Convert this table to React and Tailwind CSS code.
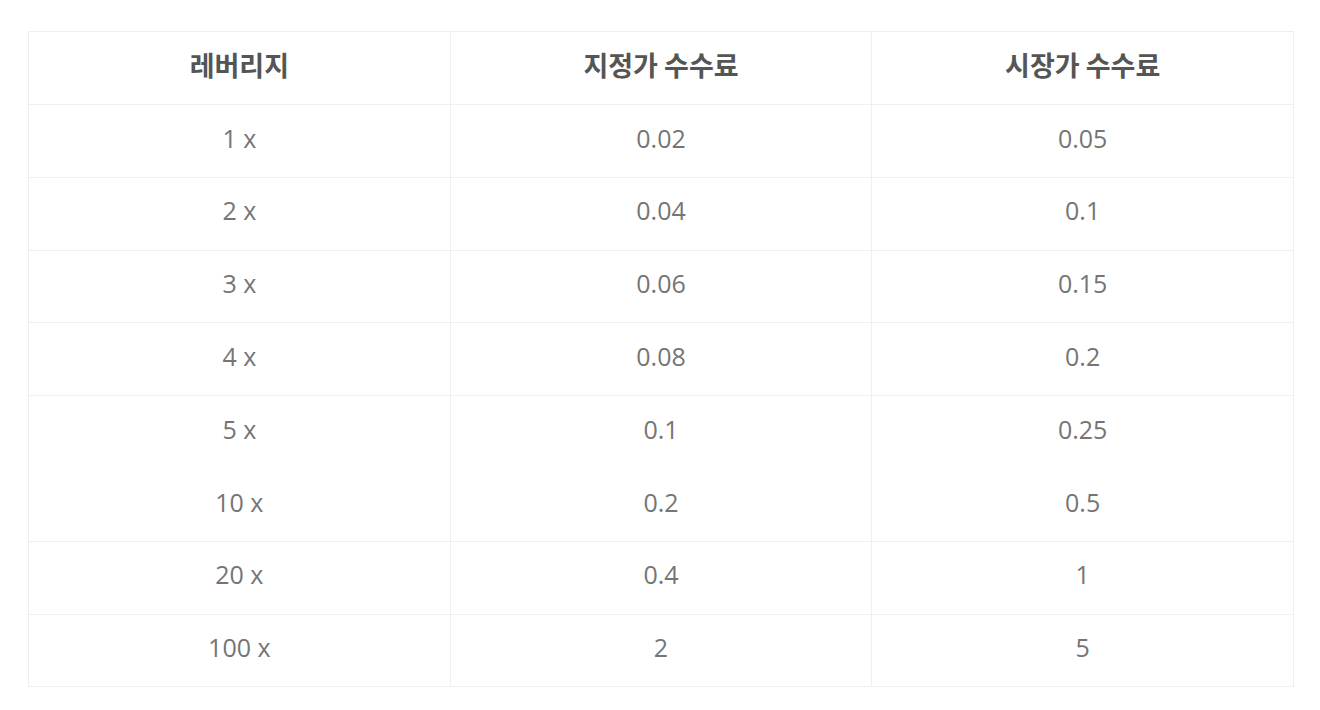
const rows = [
  ['1 x', '0.02', '0.05'],
  ['2 x', '0.04', '0.1'],
  ['3 x', '0.06', '0.15'],
  ['4 x', '0.08', '0.2'],
  ['5 x', '0.1', '0.25'],
  ['10 x', '0.2', '0.5'],
  ['20 x', '0.4', '1'],
  ['100 x', '2', '5'],
]

export default function App() {
  return (
    <div className="min-h-[710px] bg-white pt-[31px] pl-[28px] font-['Open_Sans','Noto_Sans_CJK_KR',sans-serif]">
      <div className="w-[1266px] border-t border-l border-[#efefef]">
        <div className="grid grid-cols-3 h-[73px]">
          {['레버리지', '지정가 수수료', '시장가 수수료'].map((h) => (
            <div key={h} className="flex items-center justify-center border-r border-b border-[#efefef] text-[27px] font-bold text-[#555] font-['Noto_Sans_CJK_KR',sans-serif] pb-[6px]">
              {h}
            </div>
          ))}
        </div>
        {rows.map((r, i) => (
          <div key={i} className="grid grid-cols-3 h-[72.8px]">
            {r.map((c, j) => (
              <div
                key={j}
                className={`flex items-center justify-center border-r border-[#efefef] text-[25px] text-[#757575] pb-[5px] ${i === 4 ? 'border-b-0' : 'border-b'}`}
              >
                {c}
              </div>
            ))}
          </div>
        ))}
      </div>
    </div>
  )
}
